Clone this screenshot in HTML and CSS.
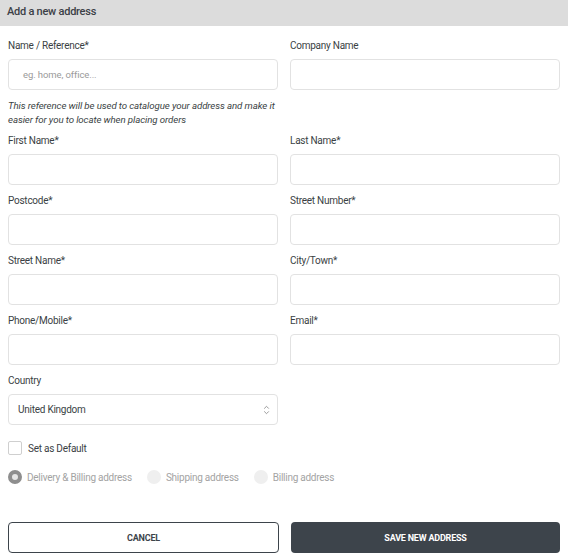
FILE: index.html
```html
<!DOCTYPE html>
<html>
<head>
<meta charset="utf-8">
<link rel="stylesheet" href="styles.css">
</head>
<body>
<div class="header">Add a new address</div>
<form class="form">
  <div class="grid">
    <div class="field">
      <label class="label">Name / Reference*</label>
      <div class="input"><span class="ph">eg. home, office...</span></div>
      <p class="help">This reference will be used to catalogue your address and make it easier for you to locate when placing orders</p>
    </div>
    <div class="field">
      <label class="label">Company Name</label>
      <div class="input"></div>
    </div>
    <div class="field">
      <label class="label">First Name*</label>
      <div class="input"></div>
    </div>
    <div class="field">
      <label class="label">Last Name*</label>
      <div class="input"></div>
    </div>
    <div class="field">
      <label class="label">Postcode*</label>
      <div class="input"></div>
    </div>
    <div class="field">
      <label class="label">Street Number*</label>
      <div class="input"></div>
    </div>
    <div class="field">
      <label class="label">Street Name*</label>
      <div class="input"></div>
    </div>
    <div class="field">
      <label class="label">City/Town*</label>
      <div class="input"></div>
    </div>
    <div class="field">
      <label class="label">Phone/Mobile*</label>
      <div class="input"></div>
    </div>
    <div class="field">
      <label class="label">Email*</label>
      <div class="input"></div>
    </div>
    <div class="field">
      <label class="label">Country</label>
      <div class="input select"><span class="val">United Kingdom</span>
        <svg class="arrows" width="7" height="10" viewBox="0 0 7 10"><path d="M1.2 3.6 L3.5 1.3 L5.8 3.6 M1.2 6.4 L3.5 8.7 L5.8 6.4" fill="none" stroke="#8f8f8f" stroke-width="0.9"/></svg>
      </div>
    </div>
  </div>
  <div class="check"><span class="box"></span><span>Set as Default</span></div>
  <div class="radios">
    <div class="radio"><span class="dot on"></span><span>Delivery &amp; Billing address</span></div>
    <div class="radio"><span class="dot"></span><span>Shipping address</span></div>
    <div class="radio"><span class="dot"></span><span>Billing address</span></div>
  </div>
  <div class="buttons">
    <div class="btn cancel">CANCEL</div>
    <div class="btn save">SAVE NEW ADDRESS</div>
  </div>
</form>
</body>
</html>
```
FILE: styles.css
```css
* { box-sizing: border-box; }
html, body { margin: 0; padding: 0; background: #fff; }
body {
  font-family: Roboto, "Liberation Sans", sans-serif;
  color: #3a3f44;
  font-size: 10px;
  letter-spacing: -0.25px;
}
.header {
  height: 26px;
  background: #dcdcdc;
  padding: 0 7px;
  line-height: 24px;
  font-size: 11px;
  font-weight: 500;
  color: #3b4046;
}
.form { padding: 13px 8px 0; }
.grid {
  display: grid;
  grid-template-columns: 270px 270px;
  column-gap: 12px;
}
.field { display: flex; flex-direction: column; margin-bottom: 9px; }
.label { height: 14px; line-height: 14px; margin: 0 0 6px; color: #3a3f44; }
.input {
  height: 31px;
  border: 1px solid #e2e2e2;
  border-radius: 4px;
  display: flex;
  align-items: center;
  padding: 0 9px;
}
.ph { color: #9a9a9a; font-size: 9.5px; padding-left: 5px; letter-spacing: -0.1px; }
.help {
  margin: 9px 0 -2px;
  font-style: italic;
  font-size: 9.7px;
  letter-spacing: -0.1px;
  line-height: 14px;
  color: #3a3f44;
}
.select { justify-content: space-between; }
.val { color: #3a3f44; }
.arrows { margin-right: -2px; }
.check {
  display: flex; align-items: center; gap: 6px;
  margin-top: 7px;
  height: 14px;
}
.box {
  width: 14px; height: 14px; border: 1px solid #cfcfcf; border-radius: 2px;
}
.radios { display: flex; gap: 15px; margin-top: 15px; height: 14px; align-items: center; }
.radio { display: flex; align-items: center; gap: 5px; color: #a3a3a3; }
.dot { width: 14px; height: 14px; border-radius: 50%; background: #efefef; }
.dot.on { border: 4px solid #8e8e8e; background: #e6e6e6; }
.buttons { display: flex; gap: 12px; margin-top: 38px; }
.btn {
  flex: 1;
  height: 31px;
  border-radius: 4px;
  display: flex; align-items: center; justify-content: center;
  font-size: 9px; font-weight: 700; letter-spacing: -0.2px;
}
.cancel { border: 1px solid #3d444b; color: #3d444b; }
.save { background: #3d444b; color: #fff; }
```
